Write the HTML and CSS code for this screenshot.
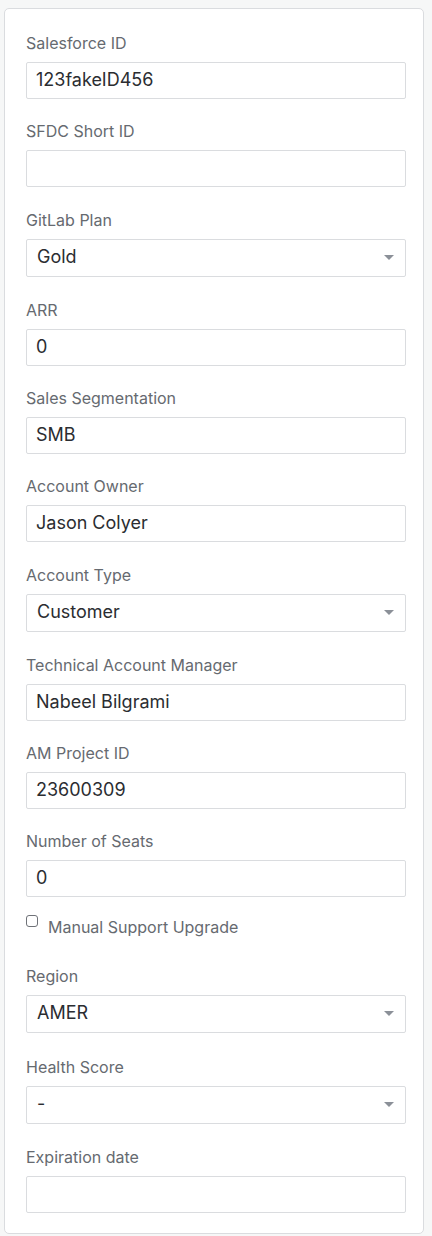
FILE: index.html
```html
<!DOCTYPE html>
<html>
<head>
<meta charset="utf-8">
<link rel="stylesheet" href="styles.css">
</head>
<body>
<div class="card">
  <div class="field"><label class="lbl">Salesforce ID</label><div class="ctl">123fakeID456</div></div>
  <div class="field"><label class="lbl">SFDC Short ID</label><div class="ctl"></div></div>
  <div class="field has-sel"><label class="lbl">GitLab Plan</label><div class="ctl sel">Gold<span class="caret"></span></div></div>
  <div class="field"><label class="lbl">ARR</label><div class="ctl">0</div></div>
  <div class="field"><label class="lbl">Sales Segmentation</label><div class="ctl">SMB</div></div>
  <div class="field"><label class="lbl">Account Owner</label><div class="ctl">Jason Colyer</div></div>
  <div class="field has-sel"><label class="lbl">Account Type</label><div class="ctl sel">Customer<span class="caret"></span></div></div>
  <div class="field"><label class="lbl">Technical Account Manager</label><div class="ctl">Nabeel Bilgrami</div></div>
  <div class="field"><label class="lbl">AM Project ID</label><div class="ctl">23600309</div></div>
  <div class="field"><label class="lbl">Number of Seats</label><div class="ctl">0</div></div>
  <div class="check"><span class="box"></span><span class="check-lbl">Manual Support Upgrade</span></div>
  <div class="field has-sel"><label class="lbl">Region</label><div class="ctl sel">AMER<span class="caret"></span></div></div>
  <div class="field has-sel"><label class="lbl">Health Score</label><div class="ctl sel">-<span class="caret"></span></div></div>
  <div class="field last"><label class="lbl">Expiration date</label><div class="ctl"></div></div>
</div>
</body>
</html>
```
FILE: styles.css
```css
html, body {
  margin: 0;
  padding: 0;
  background: #f6f7f7;
}
body {
  font-family: Inter, "Liberation Sans", Arial, sans-serif;
  padding: 8px 8px 2px 4px;
}
.card {
  background: #fff;
  border: 1.5px solid #dadcdf;
  border-radius: 5px;
  padding: 24px 17px 19px 21px;
  height: 1226px;
  box-sizing: border-box;
}
.field {
  margin-bottom: 22px;
}
.field.has-sel {
  padding: 0.5px 0 1.5px;
}
.lbl {
  display: block;
  font-size: 16px;
  line-height: 20px;
  color: #666a70;
  margin-bottom: 9px;
}
.ctl {
  position: relative;
  box-sizing: border-box;
  height: 37px;
  border: 1.5px solid #dadcdf;
  border-radius: 2px;
  padding: 0 0 0 9px;
  font-size: 18px;
  line-height: 34px;
  color: #2b2d31;
  background: #fff;
}
.ctl.sel {
  height: 38px;
  padding-left: 10px;
}
.caret {
  position: absolute;
  right: 11px;
  top: 15px;
  width: 0;
  height: 0;
  border-left: 5.5px solid transparent;
  border-right: 5.5px solid transparent;
  border-top: 5px solid #8b9098;
}
.check {
  display: flex;
  align-items: flex-start;
  margin: -4px 0 14px 0;
  height: 36px;
}
.box {
  width: 12px;
  height: 12px;
  box-sizing: border-box;
  border: 1px solid #6f7278;
  border-radius: 3px;
  background: #fff;
}
.check-lbl {
  font-size: 16px;
  line-height: 20px;
  color: #666a70;
  margin-left: 10px;
  margin-top: 2px;
}
.last {
  margin-bottom: 0;
}
```
